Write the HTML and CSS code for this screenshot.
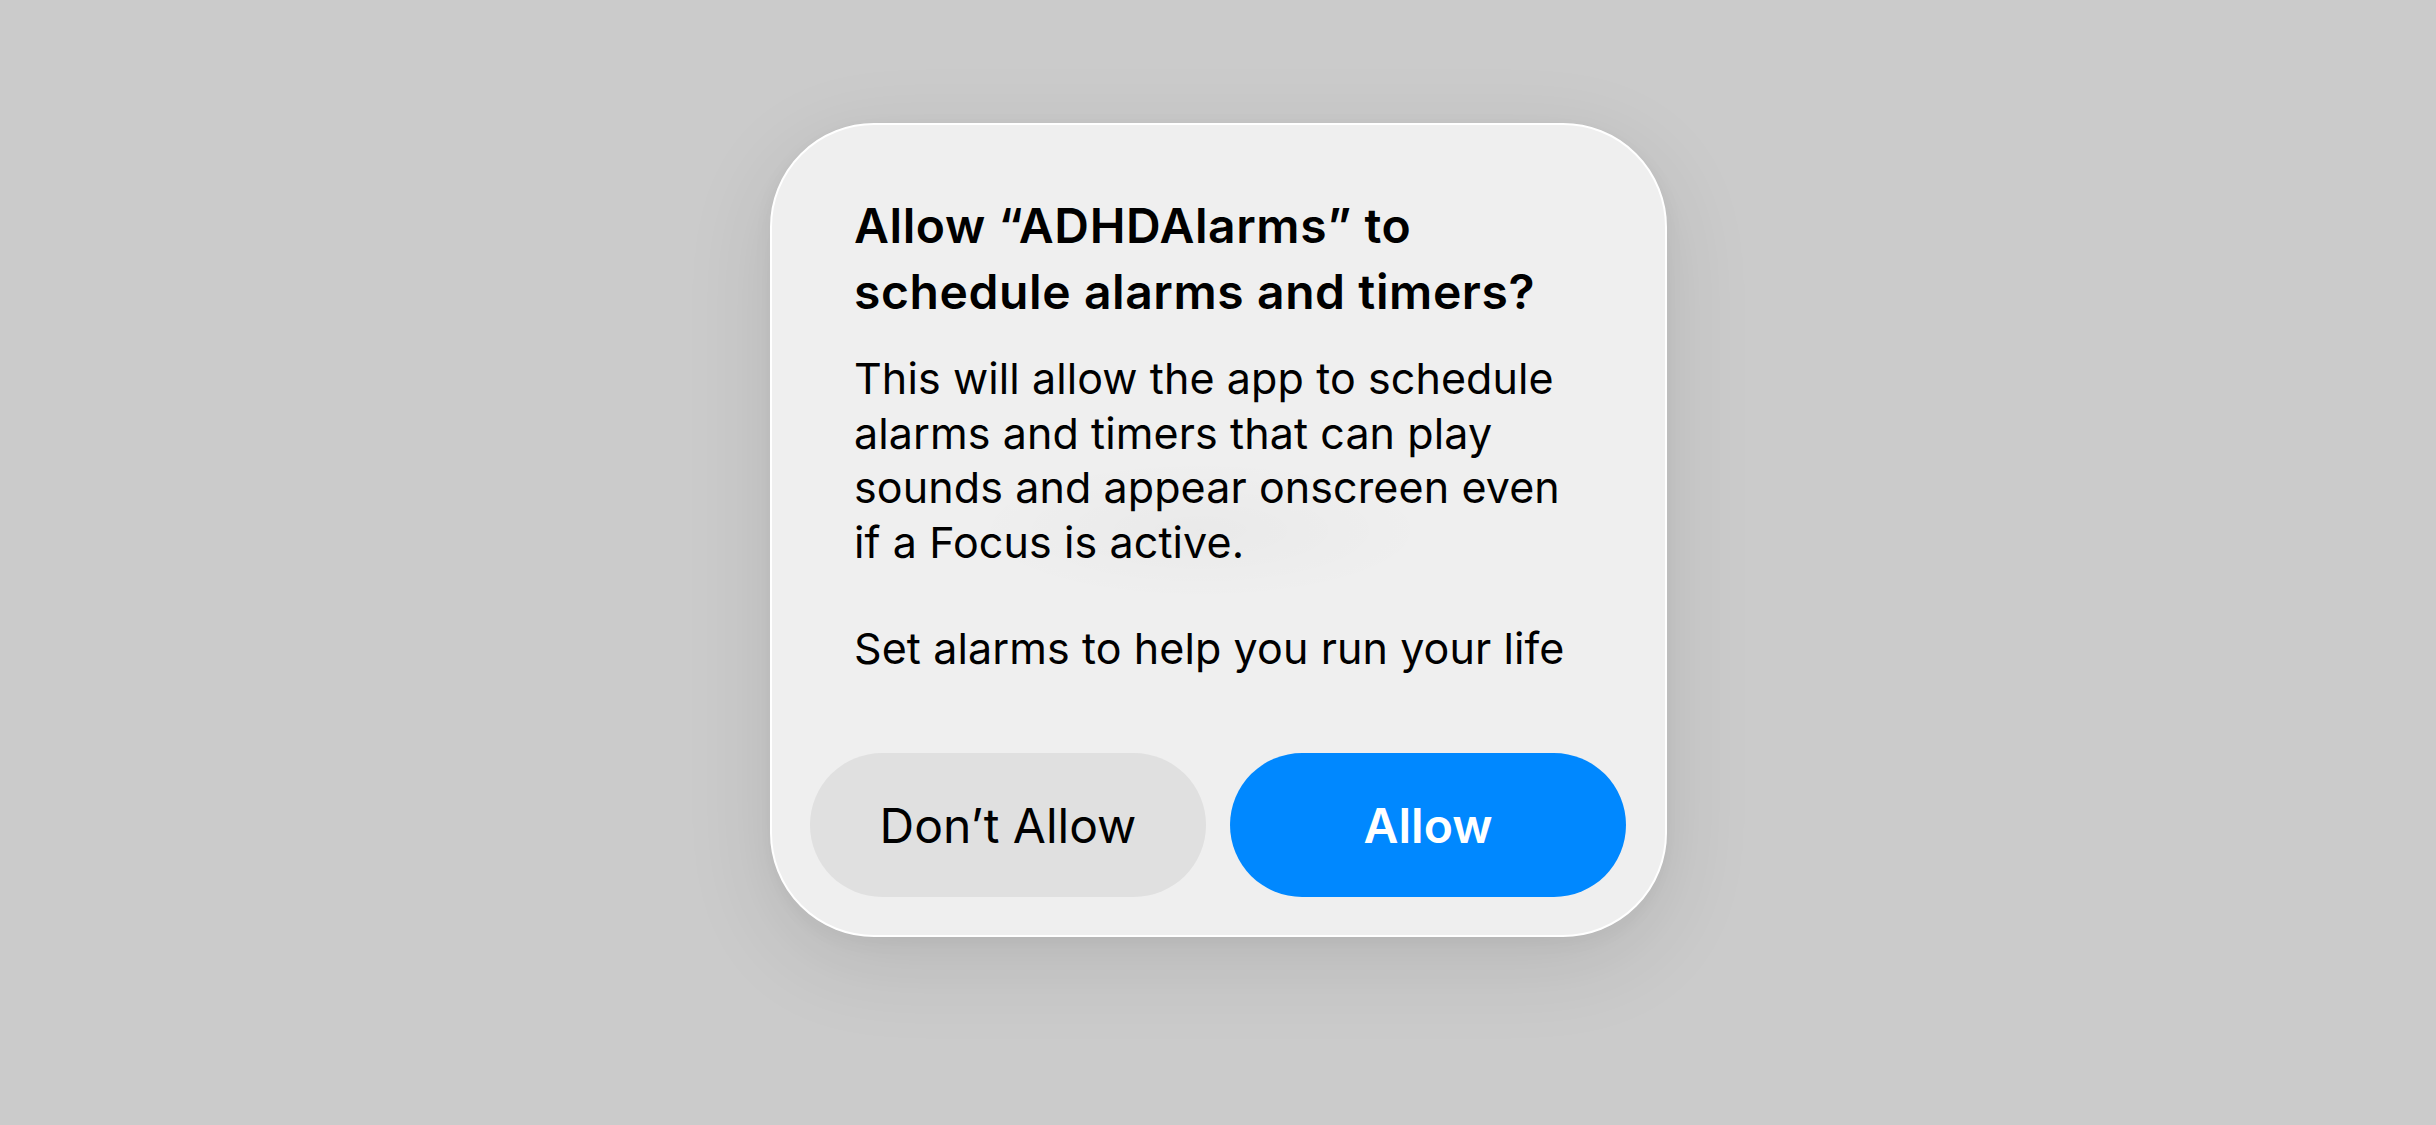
FILE: index.html
```html
<!DOCTYPE html>
<html lang="en">
<head>
<meta charset="utf-8">
<title>Alarm permission</title>
<link rel="stylesheet" href="styles.css">
</head>
<body>
<div class="screen">
  <div class="alert" role="alertdialog" aria-labelledby="alert-title">
    <div class="alert-text">
      <h1 class="alert-title" id="alert-title">Allow “ADHDAlarms” to<br>schedule alarms and timers?</h1>
      <p class="alert-message">This will allow the app to schedule<br>alarms and timers that can play<br>sounds and appear onscreen even<br>if a Focus is active.</p>
      <p class="alert-message alert-message-gap">Set alarms to help you run your life</p>
    </div>
    <div class="alert-actions">
      <button class="btn btn-secondary" type="button">Don’t Allow</button>
      <button class="btn btn-primary" type="button">Allow</button>
    </div>
  </div>
</div>
</body>
</html>
```

FILE: styles.css
```css
* {
  box-sizing: border-box;
}

html, body {
  margin: 0;
  padding: 0;
}

body {
  background: #cbcbcb;
  font-family: Inter, "Noto Sans", "Liberation Sans", sans-serif;
  color: #000;
}

.screen {
  width: 2436px;
  height: 1125px;
  display: flex;
  justify-content: center;
  align-items: flex-start;
  padding-top: 123px;
  padding-left: 1px;
}

.alert {
  width: 897px;
  height: 814px;
  border: 2px solid #ffffff;
  border-radius: 104px;
  background:
    radial-gradient(ellipse 230px 70px at 48% 50%, rgba(0, 0, 0, 0.025), rgba(0, 0, 0, 0) 100%),
    #efefef;
  box-shadow: 0 24px 90px rgba(0, 0, 0, 0.10), 0 4px 20px rgba(0, 0, 0, 0.04);
  display: flex;
  flex-direction: column;
  padding: 68px 39px 38px 38px;
}

.alert-text {
  padding: 0 30px 0 44px;
  flex: 1;
  white-space: nowrap;
}

.alert-title {
  margin: 0;
  font-size: 48px;
  line-height: 66px;
  font-weight: 600;
  letter-spacing: 0.6px;
}

.alert-message {
  margin: 26px 0 0 0;
  font-size: 43px;
  line-height: 54.5px;
  font-weight: 400;
  letter-spacing: 0.1px;
}

.alert-message-gap {
  margin-top: 52px;
}

.alert-actions {
  display: flex;
  gap: 24px;
}

.btn {
  flex: 1;
  height: 144px;
  border: none;
  border-radius: 72px;
  font-family: inherit;
  font-size: 48px;
  letter-spacing: 0px;
  padding: 0;
  cursor: pointer;
}

.btn-secondary {
  background: #e0e0e0;
  color: #000;
  font-weight: 400;
}

.btn-primary {
  background: #0088ff;
  color: #fff;
  font-weight: 600;
}
```
